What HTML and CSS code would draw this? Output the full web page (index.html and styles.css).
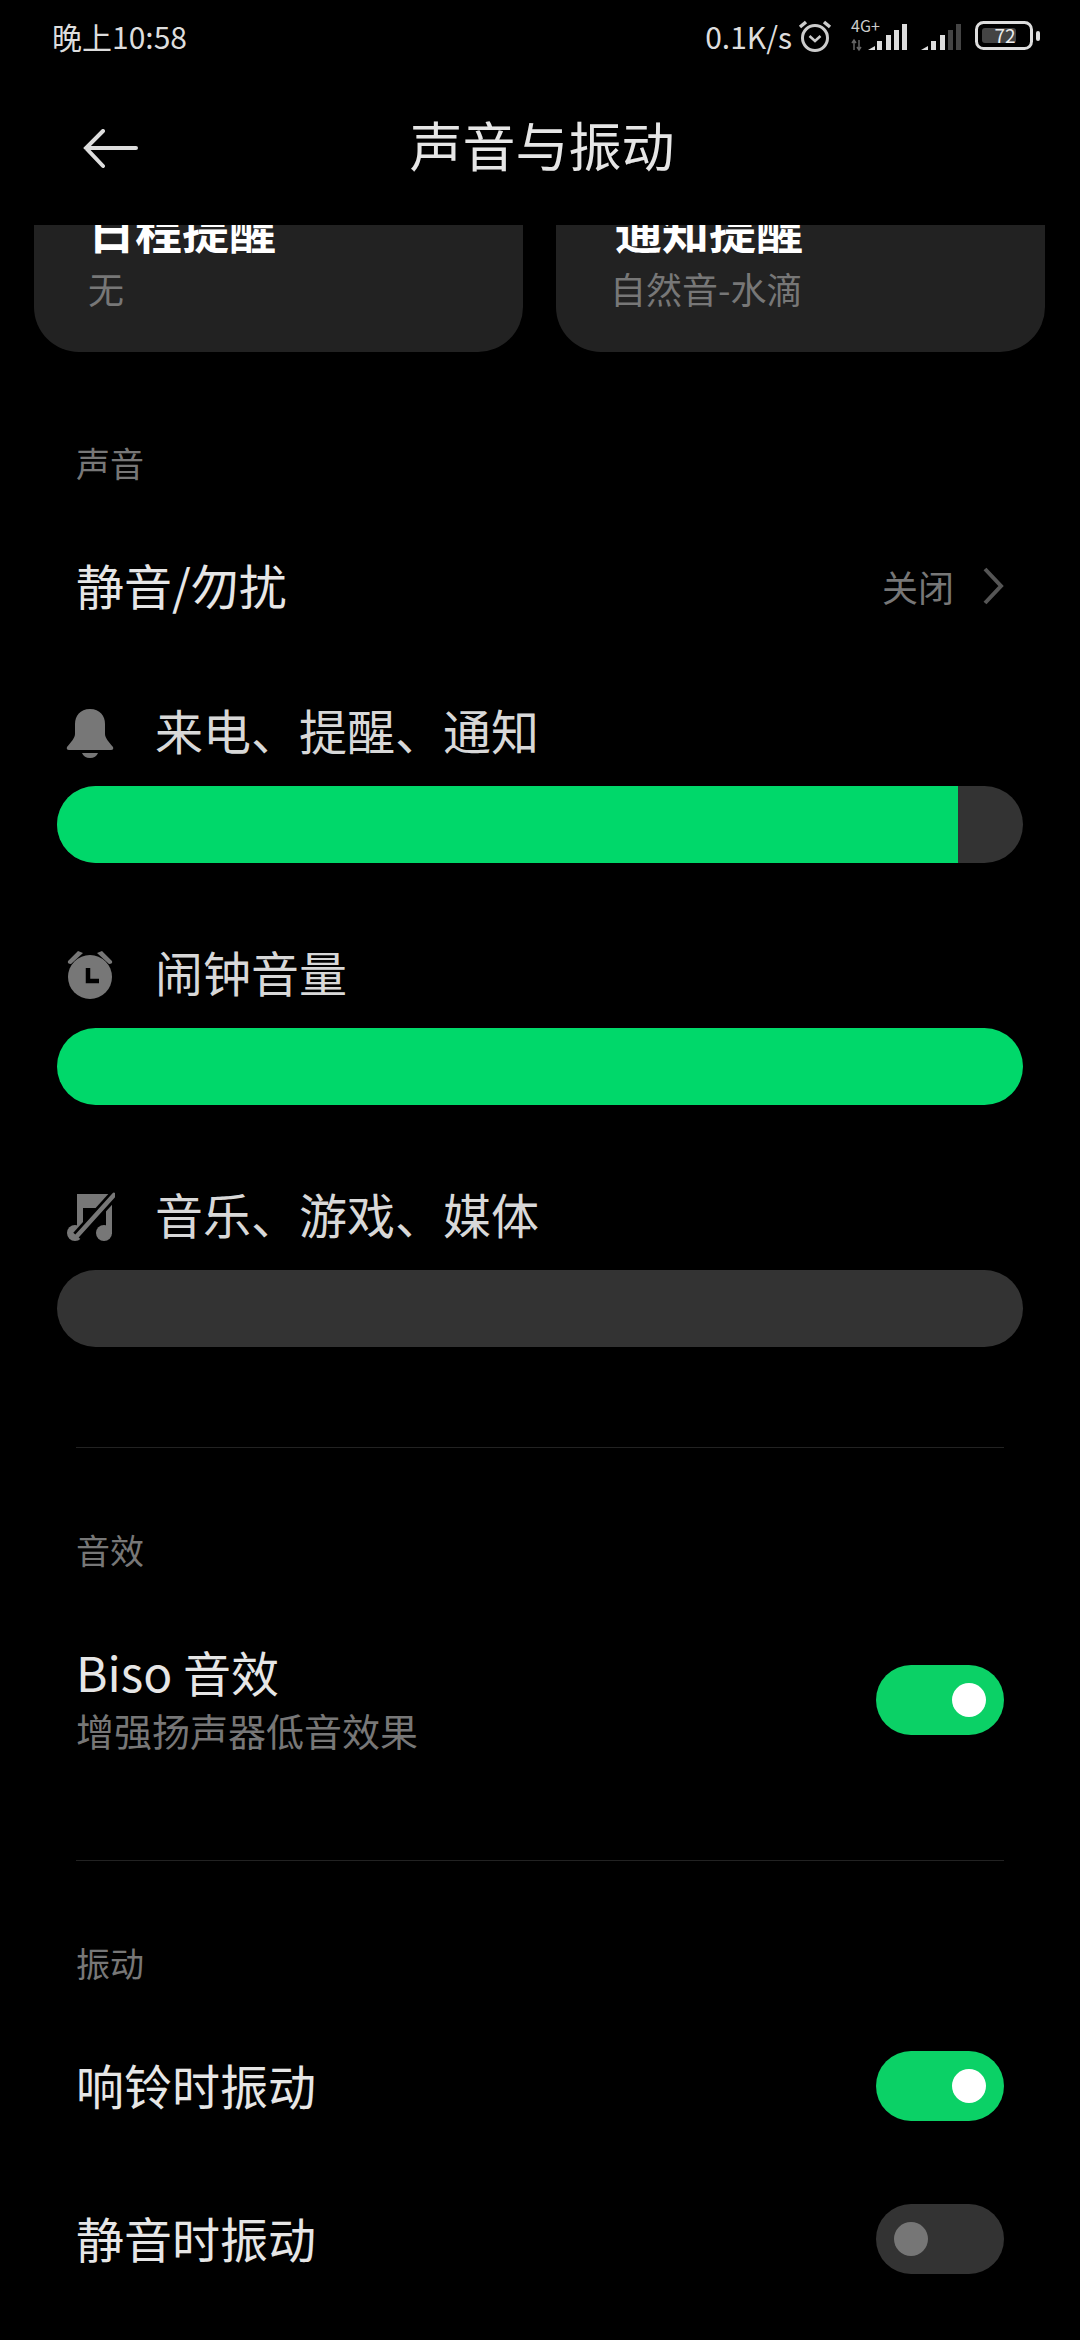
FILE: index.html
```html
<!DOCTYPE html>
<html lang="zh-CN">
<head>
    <meta charset="UTF-8">
    <meta name="viewport" content="width=device-width, initial-scale=1.0">
    <title>声音与振动</title>
    <link rel="stylesheet" href="styles.css">
</head>

<body>
    <div class="phone">
        <header class="status-bar">
            <span class="status-time">晚上10:58</span>
            <div class="status-right">
                <span class="status-speed">0.1K/s</span>
                <svg class="icon-status-alarm" width="34" height="32" viewBox="0 0 34 32">
                    <circle cx="17" cy="18" r="12.5" fill="none" stroke="#ccc" stroke-width="3"/>
                    <path d="M2 7 L8 2 M32 7 L26 2" stroke="#ccc" stroke-width="3.5" fill="none"/>
                    <path d="M11.5 16 L17 21 L22.5 16" stroke="#ccc" stroke-width="2.5" fill="none"/>
                </svg>
                <svg class="icon-signal" width="58" height="32" viewBox="0 0 58 32">
                    <text x="0" y="12" class="signal-text">4G+</text>
                    <path d="M3 30 V20 M1 23 L3 20 L5 23 M8 20 V30 M6 27 L8 30 L10 27" stroke="#666" stroke-width="1.5" fill="none"/>
                    <path d="M17 30 L24 26 V30 Z" fill="#ddd"/>
                    <rect x="26" y="21" width="5" height="9" fill="#ddd"/>
                    <rect x="35" y="15" width="5" height="15" fill="#ddd"/>
                    <rect x="43" y="10" width="5" height="20" fill="#ddd"/>
                    <rect x="51" y="4" width="5" height="26" fill="#ddd"/>
                </svg>
                <svg class="icon-signal-2" width="40" height="32" viewBox="0 0 40 32">
                    <path d="M0 30 L7 26 V30 Z" fill="#ddd"/>
                    <rect x="10" y="21" width="5" height="9" fill="#ddd"/>
                    <rect x="19" y="15" width="5" height="15" fill="#ddd"/>
                    <rect x="27" y="10" width="5" height="20" fill="#444"/>
                    <rect x="35" y="4" width="5" height="26" fill="#444"/>
                </svg>
                <svg class="icon-battery" width="66" height="30" viewBox="0 0 66 30">
                    <rect x="1.5" y="1.5" width="55" height="26" rx="7" fill="none" stroke="#ddd" stroke-width="3"/>
                    <rect x="7" y="7" width="34" height="15" rx="3" fill="#444"/>
                    <text x="30" y="22" class="battery-text" text-anchor="middle">72</text>
                    <rect x="61" y="10" width="4" height="10" rx="2" fill="#ddd"/>
                </svg>
            </div>
        </header>

        <nav class="nav-bar">
            <svg class="back-icon" width="56" height="40" viewBox="0 0 56 40">
                <path d="M3 19 H53 M20 2 L3 19 L20 37" fill="none" stroke="#ddd" stroke-width="4" stroke-linecap="round"/>
            </svg>
            <h1 class="nav-title">声音与振动</h1>
            <span class="nav-spacer"></span>
        </nav>

        <section class="card-row">
            <div class="card card-left">
                <div class="card-title">日程提醒</div>
                <div class="card-sub">无</div>
            </div>
            <div class="card card-right">
                <div class="card-title">通知提醒</div>
                <div class="card-sub">自然音-水滴</div>
            </div>
        </section>

        <h2 class="section-label label-sound">声音</h2>

        <div class="row row-dnd">
            <span class="row-title">静音/勿扰</span>
            <div class="row-value">
                <span>关闭</span>
                <svg width="22" height="38" viewBox="0 0 22 38">
                    <path d="M3 2 L19 19 L3 36" fill="none" stroke="#555" stroke-width="4"/>
                </svg>
            </div>
        </div>

        <div class="volume volume-first">
            <div class="volume-label">
                <svg class="volume-icon" width="50" height="50" viewBox="0 0 50 50">
                    <path d="M25 1 C15 1 10 8 10 16 V26 C10 30 6 34 2 39 Q1 42 4 42 H46 Q49 42 48 39 C44 34 40 30 40 26 V16 C40 8 35 1 25 1 Z" fill="#777"/>
                    <path d="M17 45 H33 Q31 50 25 50 Q19 50 17 45 Z" fill="#777"/>
                </svg>
                <span class="volume-text">来电、提醒、通知</span>
            </div>
            <div class="track"><div class="fill" style="width: 93.3%"></div></div>
        </div>

        <div class="volume">
            <div class="volume-label">
                <svg class="volume-icon" width="50" height="50" viewBox="0 0 50 50">
                    <circle cx="25" cy="27" r="22" fill="#777"/>
                    <path d="M3 11 L13 1 L18 3 L6 14 Q2 14 3 11 Z M47 11 L37 1 L32 3 L44 14 Q48 14 47 11 Z" fill="#777"/>
                    <path d="M23 18 V31 H34" fill="none" stroke="#000" stroke-width="4.5"/>
                </svg>
                <span class="volume-text">闹钟音量</span>
            </div>
            <div class="track"><div class="fill" style="width: 100%"></div></div>
        </div>

        <div class="volume">
            <div class="volume-label">
                <svg class="volume-icon" width="50" height="50" viewBox="0 0 50 50">
                    <path d="M12 2 H47 V42 H41 V16 H18 V42 H12 Z" fill="#777"/>
                    <circle cx="10" cy="41" r="8" fill="#777"/>
                    <circle cx="39" cy="41" r="8" fill="#777"/>
                    <path d="M12 44 L50 2" stroke="#000" stroke-width="10"/>
                    <path d="M12 44 L49 3" stroke="#777" stroke-width="4.5" stroke-linecap="round"/>
                </svg>
                <span class="volume-text">音乐、游戏、媒体</span>
            </div>
            <div class="track"></div>
        </div>

        <hr class="divider divider-first">

        <h2 class="section-label">音效</h2>

        <div class="row row-biso">
            <div>
                <div class="row-title">Biso 音效</div>
                <div class="row-sub">增强扬声器低音效果</div>
            </div>
            <div class="switch switch-on"><span class="knob"></span></div>
        </div>

        <hr class="divider divider-second">

        <h2 class="section-label">振动</h2>

        <div class="row row-ring">
            <span class="row-title">响铃时振动</span>
            <div class="switch switch-on"><span class="knob"></span></div>
        </div>

        <div class="row row-silent">
            <span class="row-title">静音时振动</span>
            <div class="switch"><span class="knob"></span></div>
        </div>
    </div>
</body>
</html>
```

FILE: styles.css
```css
:root {
    --color-bg: #000000;
    --color-card: #222222;
    --color-title: #e6e6e6;
    --color-muted: #777777;
    --color-green: #00d86a;
    --color-switch: #0bd166;
    --color-track: #333333;
}

* {
    margin: 0;
    padding: 0;
    box-sizing: border-box;
}

body {
    background-color: var(--color-bg);
    font-family: "Noto Sans CJK SC", "Noto Sans", sans-serif;
    color: var(--color-title);
}

.phone {
    width: 1080px;
    height: 2340px;
    overflow: hidden;
}

/* status bar */
.status-bar {
    height: 72px;
    display: flex;
    justify-content: space-between;
    align-items: center;
    padding: 0 39px 0 52px;
}

.status-time {
    font-size: 30px;
    color: #dddddd;
}

.status-right {
    display: flex;
    align-items: center;
}

.status-speed {
    font-size: 30px;
    color: #dddddd;
    margin-right: 6px;
}

.icon-signal {
    margin-left: 19px;
    overflow: visible;
}

.icon-signal-2 {
    margin-left: 12px;
}

.icon-battery {
    margin-left: 14px;
}

.signal-text {
    font-size: 16px;
    fill: #cccccc;
}

.battery-text {
    font-size: 19px;
    fill: #eeeeee;
}

/* header */
.nav-bar {
    height: 153px;
    display: flex;
    align-items: center;
    padding: 0 79px 0 83px;
}

.back-icon {
    flex: none;
}

.nav-title {
    flex: 1;
    text-align: center;
    font-size: 53px;
    line-height: 70px;
    padding-bottom: 10px;
    font-weight: 400;
    color: var(--color-title);
}

.nav-spacer {
    width: 56px;
}

/* clipped cards */
.card-row {
    display: flex;
    height: 127px;
    padding-left: 34px;
    gap: 33px;
}

.card {
    width: 489px;
    padding-left: 54px;
    background-color: var(--color-card);
    border-radius: 0 0 45px 45px;
    overflow: hidden;
}

.card-title {
    margin-top: -26px;
    font-size: 47px;
    line-height: 60px;
    font-weight: 700;
    color: #ffffff;
}

.card-right .card-title {
    margin-left: 5px;
}

.card-sub {
    margin-top: 7px;
    font-size: 36px;
    line-height: 44px;
    color: var(--color-muted);
}

/* sections */
.section-label {
    padding-left: 76px;
    font-size: 34px;
    line-height: 44px;
    font-weight: 400;
    color: var(--color-muted);
    margin-top: 80px;
}

.label-sound {
    margin-top: 89px;
}

.row {
    display: flex;
    justify-content: space-between;
    align-items: center;
    padding: 0 76px;
}

.row-title {
    display: block;
    font-size: 48px;
    line-height: 54px;
    padding-bottom: 4px;
    color: var(--color-title);
}

.row-sub {
    font-size: 38px;
    line-height: 56px;
    color: var(--color-muted);
}

.row-value {
    display: flex;
    align-items: center;
    gap: 28px;
    font-size: 36px;
    color: var(--color-muted);
}

.row-dnd {
    height: 80px;
    margin-top: 61px;
}

.row-biso {
    margin-top: 72px;
}

.row-biso .switch {
    margin-bottom: 2px;
}

.row-ring {
    height: 70px;
    margin-top: 66px;
}

.row-silent {
    height: 70px;
    margin-top: 83px;
}

/* volume sliders */
.volume {
    padding: 82px 57px 0;
}

.volume-first {
    padding-top: 77px;
}

.volume-label {
    display: flex;
    align-items: center;
    gap: 40px;
    height: 60px;
    padding-left: 8px;
    margin-bottom: 23px;
    font-size: 48px;
    color: #d8d8d8;
}

.volume-icon {
    flex: none;
}

.volume-text {
    padding-bottom: 8px;
}

.track {
    height: 77px;
    border-radius: 39px;
    background-color: var(--color-track);
    overflow: hidden;
}

.fill {
    height: 100%;
    background-color: var(--color-green);
}

.divider {
    border: none;
    height: 1px;
    margin: 100px 76px 0;
    background-color: #222222;
}

.divider-second {
    margin-top: 102px;
}

/* switches */
.switch {
    width: 128px;
    height: 70px;
    border-radius: 35px;
    background-color: var(--color-track);
    display: flex;
    align-items: center;
    padding: 0 18px;
}

.switch-on {
    background-color: var(--color-switch);
    justify-content: flex-end;
}

.knob {
    width: 34px;
    height: 34px;
    border-radius: 50%;
    background-color: #767676;
}

.switch-on .knob {
    background-color: #ffffff;
}
```
